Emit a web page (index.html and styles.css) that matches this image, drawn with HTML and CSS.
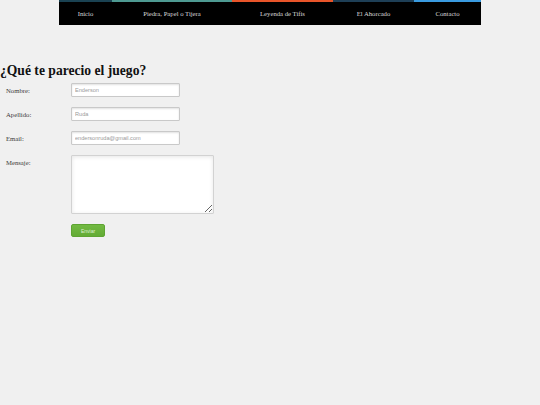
FILE: index.html
```html
<!DOCTYPE html>
<html lang="es">
<head>
<meta charset="utf-8">
<title>Contacto</title>
<link rel="stylesheet" href="styles.css">
</head>
<body>
<nav class="nav">
  <a class="nav-item c1" href="#">Inicio</a>
  <a class="nav-item c2" href="#">Piedra, Papel o Tijera</a>
  <a class="nav-item c3" href="#">Leyenda de Tifis</a>
  <a class="nav-item c4" href="#">El Ahorcado</a>
  <a class="nav-item c5" href="#">Contacto</a>
</nav>
<h1 class="title">¿Qué te parecio el juego?</h1>
<form class="form">
  <label class="label" for="nombre">Nombre:</label>
  <input class="field" id="nombre" type="text" placeholder="Enderson">
  <label class="label" for="apellido">Apellido:</label>
  <input class="field" id="apellido" type="text" placeholder="Ruda">
  <label class="label" for="email">Email:</label>
  <input class="field" id="email" type="email" placeholder="endersonruda@gmail.com">
  <label class="label" for="mensaje">Mensaje:</label>
  <textarea class="area" id="mensaje"></textarea>
  <span></span>
  <button class="send" type="button">Enviar</button>
</form>
</body>
</html>
```
FILE: styles.css
```css
html, body {
  margin: 0;
  padding: 0;
  background: #f0f0f0;
}
body {
  font-family: "Liberation Serif", "Times New Roman", serif;
  color: #222;
}
.nav {
  width: 422px;
  margin: 0 auto;
  display: grid;
  grid-template-columns: 53px 120px 101px 81px 67px;
  background: #000;
  height: 25px;
}
.nav-item {
  display: flex;
  align-items: center;
  justify-content: center;
  border-top: 2px solid #000;
  color: #d8d8d8;
  font-weight: 400;
  text-decoration: none;
  font-size: 6.7px;
  padding-bottom: 1px;
  box-sizing: border-box;
}
.c1 { border-top-color: #1a4252; }
.c2 { border-top-color: #4e9a92; }
.c3 { border-top-color: #e8552a; }
.c4 { border-top-color: #1e3f56; }
.c5 { border-top-color: #3a9be0; }
.title {
  margin: 38px 0 0;
  font-size: 13.6px;
  line-height: 16px;
  font-weight: bold;
  color: #111;
}
.form {
  margin-top: 4px;
  display: grid;
  grid-template-columns: 71px auto;
  row-gap: 10px;
  justify-items: start;
}
.label {
  font-size: 6.7px;
  color: #3a3a3a;
  padding: 4px 0 0 6px;
  line-height: 8px;
}
.field {
  width: 109px;
  height: 14px;
  box-sizing: border-box;
  margin: 0;
  border: 1px solid #c9c9c9;
  border-radius: 1px;
  background: #fff;
  box-shadow: inset 0 1px 2px rgba(0,0,0,0.12);
  font-family: "Liberation Sans", Arial, sans-serif;
  font-size: 5.6px;
  padding: 0 3px;
  outline: none;
}
.field::placeholder {
  color: #9a9a9a;
}
.area {
  width: 143px;
  height: 59px;
  box-sizing: border-box;
  margin: 0;
  border: 1px solid #d2d2d2;
  border-radius: 1px;
  background: #fff;
  box-shadow: inset 0 1px 4px rgba(0,0,0,0.1);
  font-family: "Liberation Sans", Arial, sans-serif;
  font-size: 5.6px;
  padding: 3px;
  resize: vertical;
}
.send {
  width: 34px;
  height: 13px;
  margin: 0;
  padding: 0;
  box-sizing: border-box;
  border: 1px solid #5ea432;
  border-radius: 2px;
  background: linear-gradient(#72ba42, #63ab35);
  color: #dff0d3;
  font-family: "Liberation Sans", Arial, sans-serif;
  font-size: 5px;
}
```
